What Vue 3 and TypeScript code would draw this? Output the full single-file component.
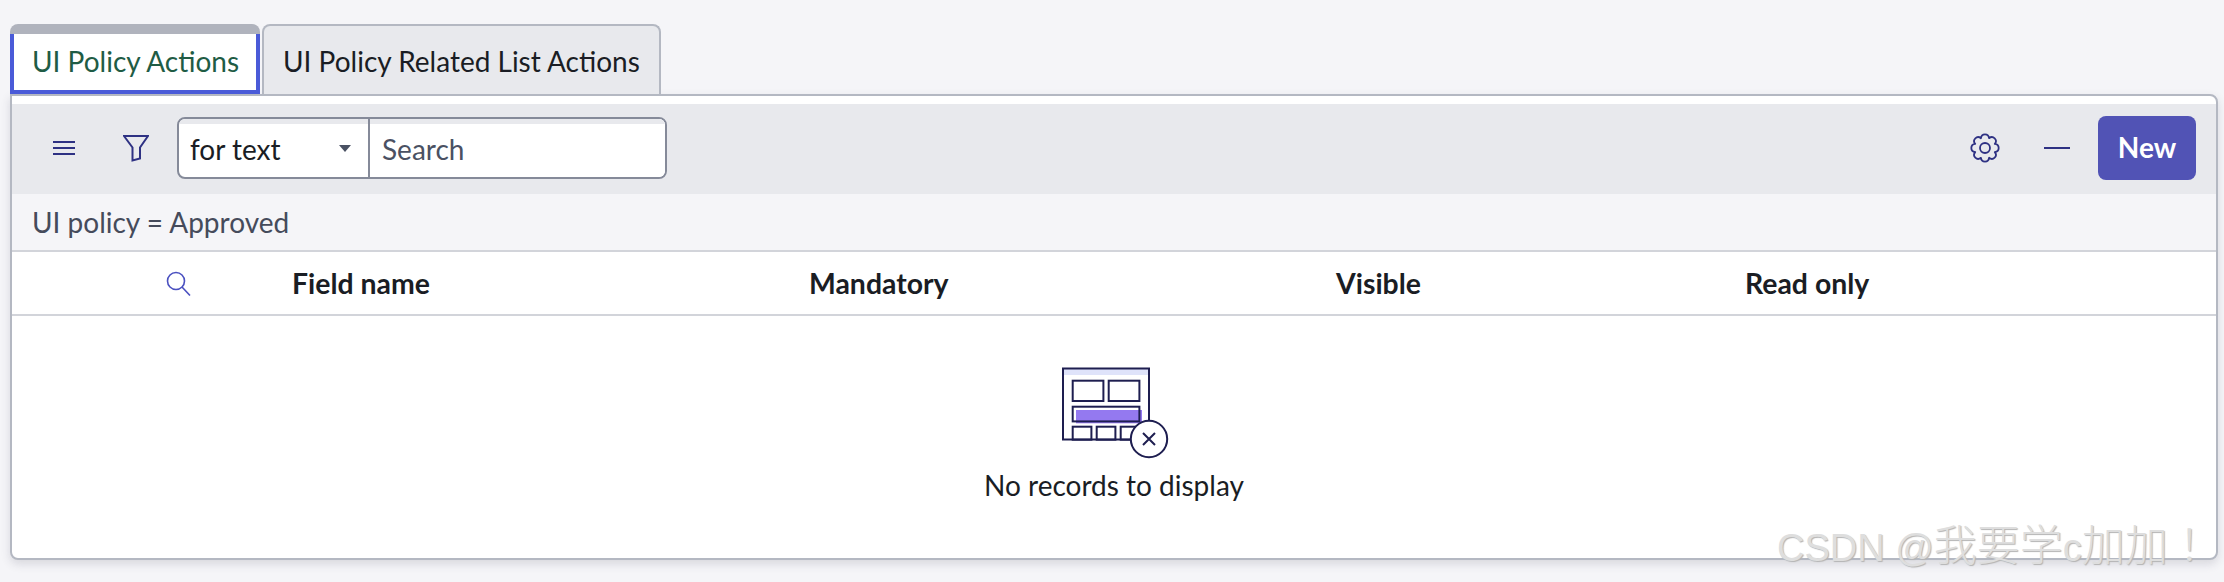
<script setup lang="ts">
const columns = ['Field name', 'Mandatory', 'Visible', 'Read only']

// gear outline with 8 rounded lobes, centred on 15,15
function gearPath(): string {
  const teeth = 8
  const step = (Math.PI * 2) / teeth
  const pt = (ang: number, r: number) =>
    `${(15 + Math.cos(ang) * r).toFixed(2)} ${(15 + Math.sin(ang) * r).toFixed(2)}`
  let d = 'M' + pt(-step / 2, 10.6)
  for (let i = 0; i < teeth; i++) {
    const a = i * step
    d += `C${pt(a - step * 0.3, 15.4)} ${pt(a + step * 0.3, 15.4)} ${pt(a + step / 2, 10.6)}`
  }
  return d + 'Z'
}
const gear = gearPath()
</script>

<template>
  <div class="page">
    <div class="tabs">
      <div class="tab active"><span class="tab-inner">UI Policy Actions</span></div>
      <div class="tab">UI Policy Related List Actions</div>
    </div>

    <div class="panel">
      <div class="toolbar">
        <button class="icon-btn menu-btn" aria-label="menu">
          <svg width="22" height="14" viewBox="0 0 22 14">
            <path d="M0 1H22M0 7H22M0 13H22" stroke="#2e3183" stroke-width="2" fill="none" />
          </svg>
        </button>
        <button class="icon-btn filter-btn" aria-label="filter">
          <svg width="26" height="27" viewBox="0 0 26 27">
            <path d="M1 1H25L17 12.5V23.5L9.5 25.5V12.5Z" stroke="#2e3183" stroke-width="2" fill="none" />
          </svg>
        </button>
        <div class="search-group">
          <div class="select">
            <span>for text</span>
            <i class="caret"></i>
          </div>
          <input class="search" placeholder="Search" />
        </div>
        <div class="spacer"></div>
        <button class="icon-btn gear-btn" aria-label="settings">
          <svg width="30" height="30" viewBox="0 0 30 30">
            <path :d="gear" stroke="#2e3183" stroke-width="1.8" fill="none" stroke-linejoin="round" />
            <circle cx="15" cy="15" r="5" stroke="#2e3183" stroke-width="1.8" fill="none" />
          </svg>
        </button>
        <button class="icon-btn dash-btn" aria-label="collapse">
          <svg width="26" height="2" viewBox="0 0 26 2">
            <path d="M0 1H26" stroke="#2e3183" stroke-width="2" />
          </svg>
        </button>
        <button class="new-btn">New</button>
      </div>

      <div class="crumb">UI policy = Approved</div>

      <div class="head-row">
        <div class="search-cell">
          <svg width="25" height="25" viewBox="0 0 25 25">
            <circle cx="10" cy="10" r="8.5" stroke="#4a50c0" stroke-width="1.6" fill="none" />
            <path d="M16 16L24 24.5" stroke="#4a50c0" stroke-width="1.6" fill="none" />
          </svg>
        </div>
        <div v-for="col in columns" :key="col" class="col">{{ col }}</div>
      </div>

      <div class="empty">
        <svg class="empty-art" width="110" height="94" viewBox="0 0 110 94">
          <rect x="3" y="2.5" width="86" height="6.5" fill="#dfe3fa" />
          <rect x="3" y="2.5" width="86" height="71" fill="none" stroke="#1e1e50" stroke-width="2" />
          <rect x="12.7" y="14.7" width="30.7" height="20.3" fill="none" stroke="#1e1e50" stroke-width="2" />
          <rect x="48.7" y="14.7" width="30.7" height="20.3" fill="none" stroke="#1e1e50" stroke-width="2" />
          <rect x="16" y="44" width="66" height="13.3" fill="#9479f0" />
          <rect x="12.7" y="40.7" width="66.7" height="14.7" fill="none" stroke="#1e1e50" stroke-width="2" />
          <rect x="12.7" y="60.7" width="18.7" height="13" fill="none" stroke="#1e1e50" stroke-width="2" />
          <rect x="36.7" y="60.7" width="18.7" height="13" fill="none" stroke="#1e1e50" stroke-width="2" />
          <rect x="60.7" y="60.7" width="18.7" height="13" fill="none" stroke="#1e1e50" stroke-width="2" />
          <circle cx="89" cy="73" r="18.2" fill="#fff" stroke="#1e1e50" stroke-width="2" />
          <path d="M83 67L95 79M95 67L83 79" stroke="#1e1e50" stroke-width="2" />
        </svg>
        <div class="empty-text">No records to display</div>
      </div>
    </div>

    <div class="watermark">CSDN @<span class="wm-cjk">我要学</span>c<span class="wm-cjk">加加</span><span class="wm-bang">！</span></div>
  </div>
</template>

<style>
html,
body {
  margin: 0;
  background: #f5f5f8;
}
</style>

<style scoped>
.page {
  position: relative;
  width: 2224px;
  height: 582px;
  box-sizing: border-box;
  padding: 24px 6px 0 10px;
  background: #f5f5f8;
  font-family: Lato, 'Liberation Sans', sans-serif;
  color: #1a1d24;
  overflow: hidden;
}

.tabs {
  display: flex;
  gap: 2px;
  height: 70px;
}

.tab {
  box-sizing: border-box;
  display: flex;
  align-items: center;
  padding: 2px 19px 0;
  width: 399px;
  font-size: 28px;
  background: #e8e9ed;
  border: 2px solid #b4b8c2;
  border-bottom: none;
  border-radius: 8px 8px 0 0;
}

.tab.active {
  width: 250px;
  padding: 10px 0 0;
  background: #b0b3bd;
  border: none;
  align-items: stretch;
}

.tab-inner {
  flex: 1;
  display: flex;
  align-items: center;
  padding: 0 0 2px 18px;
  background: #fff;
  border: 4px solid #4a5bd8;
  border-top: none;
  color: #1f5c45;
}

.panel {
  box-sizing: border-box;
  height: 466px;
  padding-top: 8px;
  background: #fff;
  border: 2px solid #b4b8c2;
  border-radius: 0 8px 8px 8px;
  box-shadow: 0 4px 10px rgba(60, 65, 85, 0.16);
}

.toolbar {
  box-sizing: border-box;
  display: flex;
  align-items: center;
  height: 90px;
  padding: 0 20px 2px 41px;
  background: #e8e9ed;
}

.icon-btn {
  display: flex;
  padding: 0;
  background: none;
  border: none;
}

.menu-btn {
  margin-right: 48px;
}

.filter-btn {
  margin-right: 28px;
}

.spacer {
  flex: 1;
}

.gear-btn {
  margin-right: 44px;
}

.dash-btn {
  margin-right: 28px;
}

.search-group {
  display: flex;
  width: 490px;
  height: 62px;
  box-sizing: border-box;
  border: 2px solid #858a99;
  border-radius: 8px;
  background: #fff;
  overflow: hidden;
}

.select {
  flex: 0 0 191px;
  box-sizing: border-box;
  display: flex;
  align-items: center;
  justify-content: space-between;
  padding: 1px 17px 0 11px;
  font-size: 28px;
  border-right: 2px solid #858a99;
  box-shadow: inset 0 5px 0 #e8e9ed;
}

.caret {
  width: 0;
  height: 0;
  border-left: 6px solid transparent;
  border-right: 6px solid transparent;
  border-top: 7px solid #4a5163;
}

.search {
  flex: 1;
  min-width: 0;
  padding: 1px 0 0 12px;
  border: none;
  outline: none;
  background: #fff;
  font: inherit;
  font-size: 28px;
  box-shadow: inset 0 5px 0 #e8e9ed;
}

.search::placeholder {
  color: #4a5163;
  opacity: 1;
}

.new-btn {
  width: 98px;
  height: 64px;
  padding: 0 0 2px;
  border: none;
  border-radius: 8px;
  background: #5153b5;
  color: #fff;
  font: inherit;
  font-size: 28px;
  font-weight: 700;
}

.crumb {
  display: flex;
  align-items: center;
  height: 56px;
  padding-left: 20px;
  background: #f5f5f8;
  border-bottom: 2px solid #d2d4da;
  font-size: 28px;
  color: #454b5b;
}

.head-row {
  display: grid;
  grid-template-columns: 280px 517px 527px 409px 1fr;
  align-items: center;
  height: 62px;
  border-bottom: 2px solid #d2d4da;
  font-size: 28.4px;
  font-weight: 700;
}

.search-cell {
  display: flex;
  padding-left: 154px;
}

.empty {
  display: flex;
  flex-direction: column;
  align-items: center;
  padding-top: 50px;
}

.empty-art {
  margin-left: 2px;
}

.empty-text {
  margin-top: 8px;
  font-size: 28px;
}

.watermark {
  position: absolute;
  left: 1777px;
  top: 520px;
  font-family: 'Liberation Sans', 'Noto Sans CJK SC', sans-serif;
  font-size: 38px;
  line-height: 44px;
  white-space: nowrap;
  color: #dedede;
  text-shadow: 1px 1px 1px #b4b4b4;
}

.wm-cjk {
  font-size: 43px;
  font-weight: 300;
}

.wm-bang {
  font-family: 'Noto Sans CJK TC', sans-serif;
  font-size: 43px;
  font-weight: 300;
}
</style>
